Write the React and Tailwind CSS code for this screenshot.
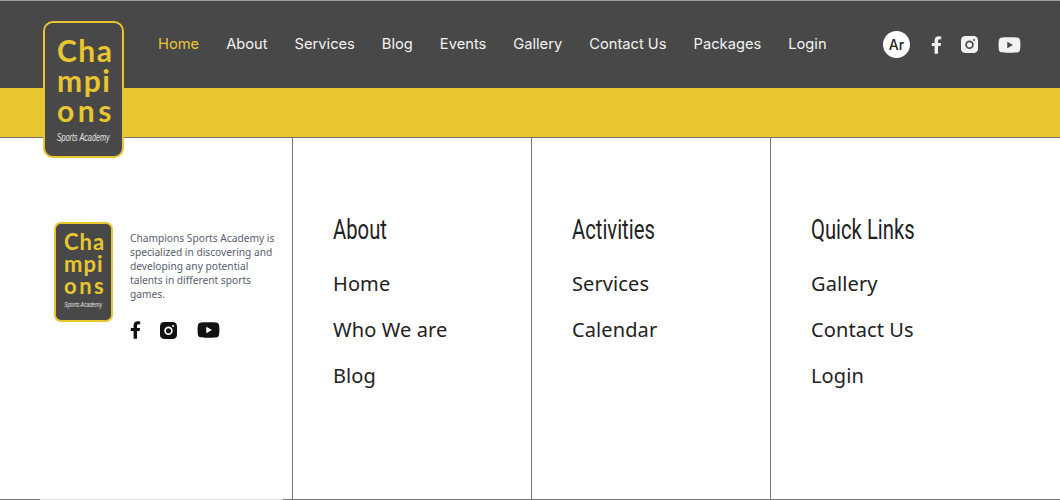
import { FaFacebookF, FaYoutube } from "react-icons/fa";

const navItems = ["Home", "About", "Services", "Blog", "Events", "Gallery", "Contact Us", "Packages", "Login"];

const columns = [
  { title: "About", links: ["Home", "Who We are", "Blog"] },
  { title: "Activities", links: ["Services", "Calendar"] },
  { title: "Quick Links", links: ["Gallery", "Contact Us", "Login"] },
];

const InstagramIcon = ({ className, cut }) => (
  <svg viewBox="0 0 18 18" className={className}>
    <rect width="18" height="18" rx="4.5" fill="currentColor" />
    <circle cx="9" cy="9.2" r="3.6" fill="none" stroke={cut} strokeWidth="1.8" />
    <circle cx="13.8" cy="4.2" r="1.1" fill={cut} />
  </svg>
);

const Logo = ({ small }) => (
  <div
    className={
      small
        ? "flex h-[100px] w-[59px] flex-col items-center overflow-hidden rounded-[7px] border-2 border-[#e8c62f] bg-[#484848] pt-[7px]"
        : "flex h-[137px] w-[81px] flex-col items-center overflow-hidden rounded-[10px] border-2 border-[#e8c62f] bg-[#484848] pt-[12px]"
    }
  >
    <div
      className={
        small
          ? "w-full pl-[8px] font-['Lato',sans-serif] text-[22px] leading-[22px] font-bold tracking-[1px] text-[#e8c62f]"
          : "w-full pl-[12px] font-['Lato',sans-serif] text-[30px] leading-[30px] font-bold tracking-[1.5px] text-[#e8c62f]"
      }
    >
      Cha
      <br />
      mpi
      <br />
      <span className={small ? "tracking-[2.5px]" : "tracking-[3.5px]"}>ons</span>
    </div>
    <div
      className={
        small
          ? "mt-[3px] scale-x-[0.65] font-['Liberation_Sans',sans-serif] text-[8px] leading-[9px] whitespace-nowrap text-[#e4e4e4] italic"
          : "mt-[6px] scale-x-[0.66] font-['Liberation_Sans',sans-serif] text-[11px] leading-[12px] whitespace-nowrap text-[#e4e4e4] italic"
      }
    >
      Sports Academy
    </div>
  </div>
);

export default function App() {
  return (
    <div className="relative h-[500px] w-[1060px] overflow-hidden bg-white">
      <header className="border-t border-[#a09a9a]">
        <div className="flex h-[87px] items-center bg-[#484848] pr-[39px] pl-[158px]">
          <nav className="flex gap-[27px] font-['Inter',sans-serif] text-[14.7px] text-[#f2f2f2]">
            {navItems.map((item) => (
              <a key={item} className={item === "Home" ? "text-[#e8c62f]" : ""}>
                {item}
              </a>
            ))}
          </nav>
          <div className="ml-auto flex items-center text-[#f2f2f2]">
            <div className="flex h-[27px] w-[27px] items-center justify-center rounded-full bg-white font-['Inter',sans-serif] text-[14px] font-medium text-[#222]">
              Ar
            </div>
            <FaFacebookF className="ml-[21px] h-[18px] w-[11px]" />
            <InstagramIcon className="ml-[19px] h-[17px] w-[17px]" cut="#484848" />
            <FaYoutube className="ml-[20px] h-[22px] w-[23px]" />
          </div>
        </div>
        <div className="h-[50px] border-b border-[#77716a] bg-[#e8c62f]" />
      </header>

      {/* logo hangs over the yellow bar */}
      <div className="absolute top-[21px] left-[43px]">
        <Logo />
      </div>

      <footer>
        <div className="grid h-[361px] grid-cols-[293px_239px_239px_1fr]">
          <div className="flex border-r border-[#777] pt-[84px] pl-[54px]">
            <Logo small />
            <div className="ml-[17px] w-[148px]">
              <p className="pt-[9px] font-['Noto_Sans',sans-serif] text-[10.2px] leading-[14px] text-[#555e6e]">
                Champions Sports Academy is specialized in discovering and developing any potential talents in different sports games.
              </p>
              <div className="mt-[18px] flex items-center text-[#111]">
                <FaFacebookF className="h-[18px] w-[11px]" />
                <InstagramIcon className="ml-[19px] h-[17px] w-[17px]" cut="#fff" />
                <FaYoutube className="ml-[20px] h-[22px] w-[23px]" />
              </div>
            </div>
          </div>
          {columns.map((col, i) => (
            <div key={col.title} className={i < 2 ? "border-r border-[#777] pt-[77px] pl-[40px]" : "pt-[77px] pl-[40px]"}>
              <h3 className="origin-left scale-x-[0.75] font-['Roboto',sans-serif] text-[27px] leading-[30px] whitespace-nowrap text-[#222]">
                {col.title}
              </h3>
              <ul className="mt-[25px] flex flex-col gap-[18px] font-['Noto_Sans',sans-serif] text-[20px] leading-[28px] tracking-[0.1px] text-[#222]">
                {col.links.map((link) => (
                  <li key={link}>{link}</li>
                ))}
              </ul>
            </div>
          ))}
        </div>
        <div className="flex h-px">
          <div className="w-[40px] bg-[#777]" />
          <div className="w-[243px] bg-[#ddd]" />
          <div className="flex-1 bg-[#777]" />
        </div>
      </footer>
    </div>
  );
}
